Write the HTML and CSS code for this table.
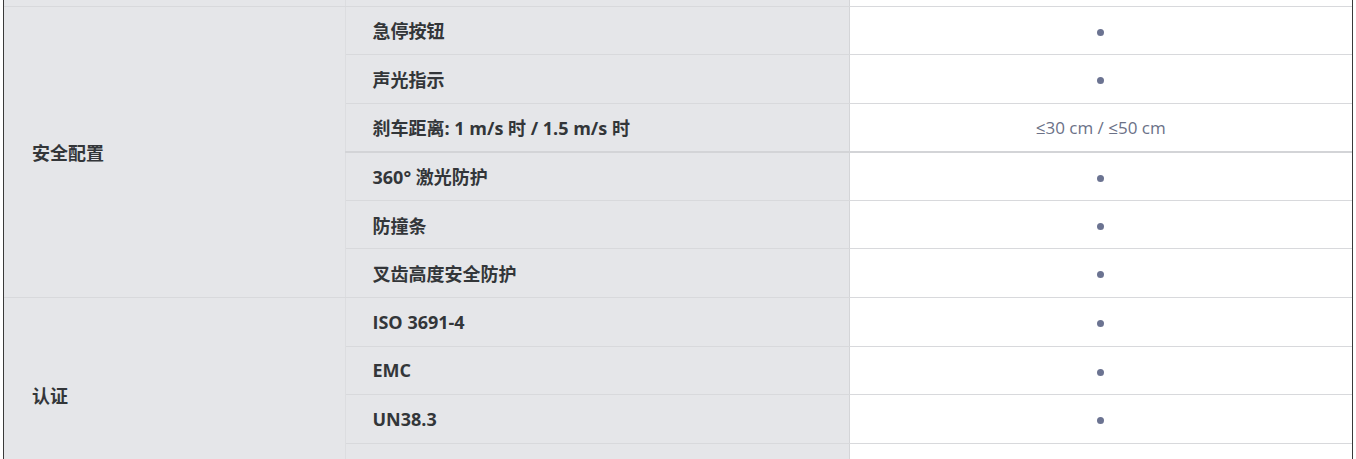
FILE: index.html
```html
<!DOCTYPE html>
<html lang="zh-CN">
<head>
<meta charset="utf-8">
<title>规格</title>
<link rel="stylesheet" href="styles.css">
</head>
<body>
<div class="wrap">
  <table class="spec">
    <colgroup>
      <col class="c1"><col class="c2"><col class="c3">
    </colgroup>
    <tbody>
      <tr class="partial"><td class="group"></td><td class="name"></td><td class="val"></td></tr>
      <tr><td class="group" rowspan="6">安全配置</td><td class="name">急停按钮</td><td class="val"><span class="dot"></span></td></tr>
      <tr><td class="name">声光指示</td><td class="val"><span class="dot"></span></td></tr>
      <tr class="thick"><td class="name">刹车距离: 1 m/s 时 / 1.5 m/s 时</td><td class="val"><span class="txt">≤30 cm / ≤50 cm</span></td></tr>
      <tr><td class="name">360° 激光防护</td><td class="val"><span class="dot"></span></td></tr>
      <tr><td class="name">防撞条</td><td class="val"><span class="dot"></span></td></tr>
      <tr><td class="name">叉齿高度安全防护</td><td class="val"><span class="dot"></span></td></tr>
      <tr><td class="group" rowspan="4">认证</td><td class="name">ISO 3691-4</td><td class="val"><span class="dot"></span></td></tr>
      <tr><td class="name">EMC</td><td class="val"><span class="dot"></span></td></tr>
      <tr><td class="name">UN38.3</td><td class="val"><span class="dot"></span></td></tr>
      <tr><td class="name"></td><td class="val"></td></tr>
    </tbody>
  </table>
</div>
</body>
</html>
```
FILE: styles.css
```css
html, body {
  margin: 0;
  padding: 0;
  background: #ffffff;
}
body {
  font-family: "Open Sans", "Noto Sans CJK SC", sans-serif;
  overflow: hidden;
}
.wrap {
  margin-left: 3px;
  width: 1348px;
  border-left: 1px solid #3a3a3a;
  border-right: 1px solid #3a3a3a;
}
.spec {
  width: 100%;
  border-collapse: collapse;
  table-layout: fixed;
}
.c1 { width: 341px; }
.c2 { width: 504px; }
.c3 { width: 503px; }
.spec td {
  border-bottom: 1px solid #d8d9dc;
  height: 48.6px;
  padding: 0 0 0 28px;
  vertical-align: middle;
  box-sizing: border-box;
}
.spec tr.partial td {
  height: 6px;
  padding: 0;
}
.spec tr.thick td {
  border-bottom: 2px solid #d3d4d7;
}
.group {
  background: #e5e6e9;
  font-weight: 700;
  font-size: 18px;
  color: #333639;
  border-right: 1px solid #dcdde0;
}
.spec td.name {
  padding-left: 27px;
  background: #e5e6e9;
  font-weight: 700;
  font-size: 18px;
  color: #333639;
  border-right: 1px solid #d4d5d8;
}
.spec td.val {
  background: #ffffff;
  text-align: center;
  padding: 0;
}
.dot {
  display: inline-block;
  width: 7px;
  height: 7px;
  border-radius: 50%;
  background: #6b7391;
  vertical-align: middle;
}
.txt {
  font-size: 17px;
  color: #6b7187;
}
```
